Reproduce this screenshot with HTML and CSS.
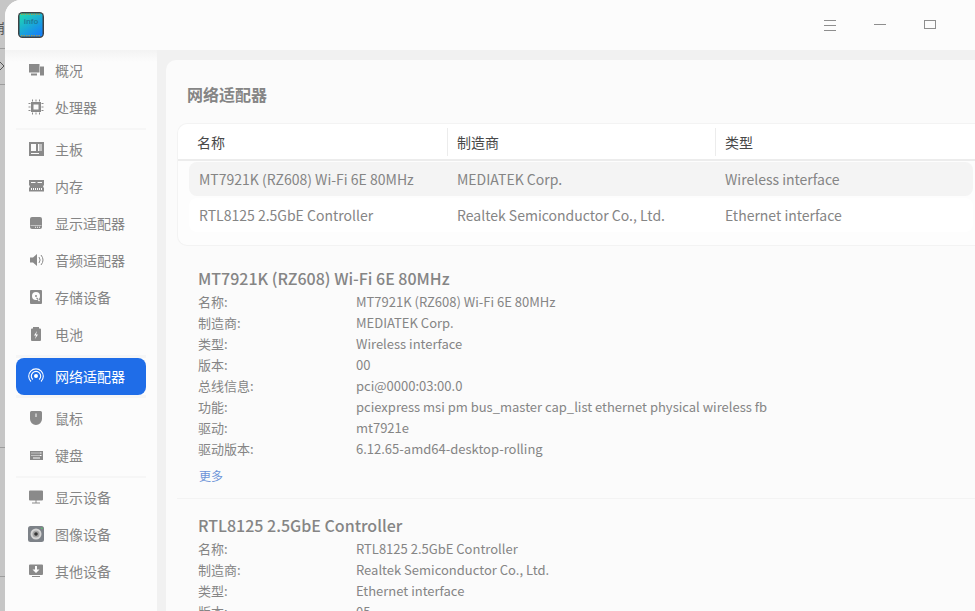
FILE: index.html
```html
<!DOCTYPE html>
<html lang="zh-CN">
<head>
<meta charset="utf-8">
<title>设备管理器</title>
<link rel="stylesheet" href="styles.css">
</head>
<body>
<div class="desktop">
  <span class="bg-text bg-a">崩</span>
  <svg class="bg-chev" viewBox="0 0 5 10" width="5" height="10"><path d="M0 1l4 4l-4 4"/></svg>
  <div class="bg-line bg-l1"></div>
  <div class="bg-line bg-l2"></div>
  <div class="bg-line bg-l3"></div>
  <div class="bg-line bg-l4"></div>
</div>
<div class="window">
  <header class="titlebar">
    <svg class="logo" viewBox="0 0 26 26" width="26" height="26">
      <defs><linearGradient id="lg" x1="0" y1="0" x2="0.7" y2="1"><stop offset="0" stop-color="#1fdcae"/><stop offset="1" stop-color="#1683f5"/></linearGradient></defs>
      <rect width="26" height="26" rx="4.500" fill="#3d4245"/>
      <rect x="1.500" y="1.500" width="23" height="23" rx="2" fill="url(#lg)"/>
      <path class="logo-dash" d="M3 2.300h20M3 23.700h20"/>
      <text x="13" y="11.500" class="logo-text" text-anchor="middle">info</text>
    </svg>
    <div class="win-btns">
      <svg width="14" height="14" viewBox="0 0 14 14" class="win-icon"><path d="M1 1.500h12M1 6.500h12M1 11.500h12" /></svg>
      <svg width="14" height="14" viewBox="0 0 14 14" class="win-icon"><path d="M1 5.500h12" /></svg>
      <svg width="14" height="14" viewBox="0 0 14 14" class="win-icon"><rect x="1.500" y="1.500" width="11" height="8" /></svg>
    </div>
  </header>
  <div class="body">
    <nav class="sidebar">
      <a class="nav-item">
        <svg class="ic" viewBox="0 0 16 16"><path d="M1 2h10.500v8.500h-10.500zM3 11.500h6v2h-6zM12 4.500h4v9h-4z" /></svg><span>概况</span></a>
      <a class="nav-item">
        <svg class="ic" viewBox="0 0 16 16"><path d="M3 3h10v10h-10zM5.500 5.500v5h5v-5zM4 0.500h1v2h-1zM7.500 0.500h1v2h-1zM11 0.500h1v2h-1zM4 13.500h1v2h-1zM7.500 13.500h1v2h-1zM11 13.500h1v2h-1zM0.500 4h2v1h-2zM0.500 7.500h2v1h-2zM0.500 11h2v1h-2zM13.500 4h2v1h-2zM13.500 7.500h2v1h-2zM13.500 11h2v1h-2z" fill-rule="evenodd"/></svg><span>处理器</span></a>
      <div class="sep"></div>
      <a class="nav-item">
        <svg class="ic" viewBox="0 0 16 16"><path d="M1 1h15v14h-15zM3 3v7h5v-7zM10 3v7h1.500v-7zM12.500 3v7h1v-7zM3 12v1h8v-1z" fill-rule="evenodd"/></svg><span>主板</span></a>
      <a class="nav-item">
        <svg class="ic" viewBox="0 0 16 16"><path d="M1 2h15v5.500h-.8v2h.8v4h-15v-4h.8v-2h-.8zM3 4v1h4.500v-1zM9.500 4v1h4.500v-1zM3 10v2h1v-2zM5 10v2h1v-2zM7 10v2h1v-2zM9 10v2h1v-2zM11 10v2h1v-2zM13 10v2h1v-2z" fill-rule="evenodd"/></svg><span>内存</span></a>
      <a class="nav-item">
        <svg class="ic" viewBox="0 0 16 16"><path d="M4 2h8a2 2 0 0 1 2 2v8a2 2 0 0 1-2 2h-8a2 2 0 0 1-2-2v-8a2 2 0 0 1 2-2zM7 11.800v1h1v-1zM9 11.800v1h1v-1zM11 11.800v1h1v-1zM2.500 10.500v.6h11v-.6z" fill-rule="evenodd"/></svg><span>显示适配器</span></a>
      <a class="nav-item">
        <svg class="ic" viewBox="0 0 16 16"><path d="M2 5.500h3l4-3.500v12l-4-3.500h-3z"/><path class="arc" d="M11 5a5 5 0 0 1 0 6M13 3a8 8 0 0 1 0 10"/></svg><span>音频适配器</span></a>
      <a class="nav-item">
        <svg class="ic" viewBox="0 0 16 16"><path d="M3 1h10a1 1 0 0 1 1 1v12a1 1 0 0 1-1 1h-10a1 1 0 0 1-1-1v-12a1 1 0 0 1 1-1zM8 3a4 4 0 1 0 0 8a4 4 0 1 0 0-8zM8 6a1 1 0 1 1 0 2a1 1 0 1 1 0-2zM8 9l3 3.500l1-1l-3-3z" fill-rule="evenodd"/></svg><span>存储设备</span></a>
      <a class="nav-item">
        <svg class="ic" viewBox="0 0 16 16"><path d="M5 1h6v1.500h1a1 1 0 0 1 1 1v10.500a1 1 0 0 1-1 1h-8a1 1 0 0 1-1-1v-10.500a1 1 0 0 1 1-1h1zM9 5l-3 4.500h2l-1 3.500l3-4.500h-2z" fill-rule="evenodd"/></svg><span>电池</span></a>
      <div class="band band-before"></div>
      <a class="nav-item active">
        <svg class="ic ic-net" viewBox="0 0 16 16"><circle cx="8" cy="8" r="2" class="dot"/><path class="arc" d="M4.800 11.500a4.700 4.700 0 1 1 6.400 0M3 13.500a7.300 7.300 0 1 1 10 0"/></svg><span>网络适配器</span></a>
      <div class="band band-after"></div>
      <a class="nav-item">
        <svg class="ic" viewBox="0 0 16 16"><path d="M3.500 1h9a1.500 1.500 0 0 1 1.500 1.500v6.500a6 6 0 0 1-12 0v-6.500a1.500 1.500 0 0 1 1.500-1.500zM7.500 3.500v3.500h1v-3.500z" fill-rule="evenodd"/></svg><span>鼠标</span></a>
      <a class="nav-item">
        <svg class="ic" viewBox="0 0 16 16"><path d="M2 4h13v9h-13zM3.500 5.500v1h1v-1zM5.500 5.500v1h1v-1zM7.500 5.500v1h1v-1zM9.500 5.500v1h1v-1zM11.500 5.500v1h2v-1zM3.500 8v1h1v-1zM5.500 8v1h1v-1zM7.500 8v1h1v-1zM9.500 8v1h1v-1zM11.500 8v1h2v-1zM5 10.500v1h7v-1z" fill-rule="evenodd"/></svg><span>键盘</span></a>
      <div class="sep"></div>
      <a class="nav-item">
        <svg class="ic" viewBox="0 0 16 16"><path d="M2 1.500h12a1 1 0 0 1 1 1v8a1 1 0 0 1-1 1h-12a1 1 0 0 1-1-1v-8a1 1 0 0 1 1-1zM7.500 11.500h1v2h-1zM4 13.500h8v1h-8z"/></svg><span>显示设备</span></a>
      <a class="nav-item">
        <svg class="ic ic-cam" viewBox="0 0 16 16"><rect width="16" height="16" rx="2.500" fill="#7d8288"/><circle cx="8" cy="8" r="5.500" fill="#d5d5d5"/><circle cx="8" cy="8" r="3.500" fill="#a5a5a5"/><circle cx="8" cy="8" r="1.800" fill="#333"/><circle cx="13.800" cy="2.200" r=".7" fill="#4cd964"/></svg><span>图像设备</span></a>
      <a class="nav-item">
        <svg class="ic" viewBox="0 0 16 16"><path d="M2 1.500h12a1 1 0 0 1 1 1v8.500a1 1 0 0 1-1 1h-12a1 1 0 0 1-1-1v-8.500a1 1 0 0 1 1-1zM7 3v3.500h-2.500l3.500 3.500l3.500-3.500h-2.500v-3.500zM4 13h8v1h-8z" fill-rule="evenodd"/></svg><span>其他设备</span></a>
    </nav>
    <main class="content">
      <h1 class="heading">网络适配器</h1>
      <section class="table">
        <div class="thead">
          <div class="th th-1">名称</div>
          <div class="th th-2">制造商</div>
          <div class="th th-3">类型</div>
        </div>
        <div class="rows">
          <div class="row row-sel">
            <div class="td td-1">MT7921K (RZ608) Wi-Fi 6E 80MHz</div>
            <div class="td td-2">MEDIATEK Corp.</div>
            <div class="td">Wireless interface</div>
          </div>
          <div class="row">
            <div class="td td-1">RTL8125 2.5GbE Controller</div>
            <div class="td td-2">Realtek Semiconductor Co., Ltd.</div>
            <div class="td">Ethernet interface</div>
          </div>
        </div>
      </section>
      <section class="detail">
        <h2 class="dev-title">MT7921K (RZ608) Wi-Fi 6E 80MHz</h2>
        <dl class="props">
          <dt>名称:</dt><dd>MT7921K (RZ608) Wi-Fi 6E 80MHz</dd>
          <dt>制造商:</dt><dd>MEDIATEK Corp.</dd>
          <dt>类型:</dt><dd>Wireless interface</dd>
          <dt>版本:</dt><dd>00</dd>
          <dt>总线信息:</dt><dd>pci@0000:03:00.0</dd>
          <dt>功能:</dt><dd>pciexpress msi pm bus_master cap_list ethernet physical wireless fb</dd>
          <dt>驱动:</dt><dd>mt7921e</dd>
          <dt>驱动版本:</dt><dd>6.12.65-amd64-desktop-rolling</dd>
        </dl>
        <a class="more">更多</a>
      </section>
      <section class="detail detail-2">
        <h2 class="dev-title">RTL8125 2.5GbE Controller</h2>
        <dl class="props">
          <dt>名称:</dt><dd>RTL8125 2.5GbE Controller</dd>
          <dt>制造商:</dt><dd>Realtek Semiconductor Co., Ltd.</dd>
          <dt>类型:</dt><dd>Ethernet interface</dd>
          <dt>版本:</dt><dd>05</dd>
        </dl>
      </section>
    </main>
  </div>
</div>
</body>
</html>
```

FILE: styles.css
```css
* { box-sizing: border-box; }
html, body { margin: 0; height: 100%; overflow: hidden; }
body {
  width: 975px;
  height: 611px;
  position: relative;
  background: #c6c6c6;
  font-family: "Noto Sans CJK SC", "Noto Sans", sans-serif;
  color: #858585;
}
.desktop { position: absolute; inset: 0; }
.bg-text { position: absolute; left: -9px; top: 18px; color: #555; font-size: 14px; line-height: 18px; }
.bg-chev { position: absolute; left: 0; top: 61px; fill: none; stroke: #555; stroke-width: 1; }
.bg-line { position: absolute; left: 0; width: 5px; height: 1px; background: #9d9d9d; }
.bg-l1 { top: 48px; }
.bg-l2 { top: 84px; }
.bg-l3 { top: 447px; }
.bg-l4 { top: 576px; }
.window {
  position: absolute;
  left: 5px;
  top: 0;
  width: 970px;
  height: 611px;
  border-top-left-radius: 16px;
  background: #fcfcfc;
  display: flex;
  flex-direction: column;
  overflow: hidden;
}
.titlebar {
  height: 50px;
  flex: none;
  background: #fcfcfc;
  display: flex;
  align-items: center;
  justify-content: space-between;
  padding: 0 0 0 13px;
}
.logo { display: block; }
.logo-dash { fill: none; stroke: #b39a3c; stroke-width: 1; stroke-dasharray: 1.500 1; }
.logo-text { font-family: "Liberation Sans", sans-serif; font-size: 8px; font-weight: 700; fill: #1f7d9c; }
.win-btns { display: flex; gap: 36px; padding-right: 38px; margin-top: 2px; }
.win-icon { fill: none; stroke: #8e8e8e; stroke-width: 1; display: block; }
.body { flex: 1; display: flex; min-height: 0; background: #f1f1f1; }
.sidebar {
  width: 152px;
  flex: none;
  padding: 2px 11px 0;
  display: flex;
  flex-direction: column;
  background: linear-gradient(#f3f3f3, #fcfcfc 12px);
}
.nav-item {
  height: 37px;
  flex: none;
  display: flex;
  align-items: center;
  gap: 11px;
  padding: 0 0 1px 12px;
  font-size: 14px;
  color: #858585;
  border-radius: 8px;
}
.nav-item.active { background: #1f6de8; color: #fff; }
.ic { width: 16px; height: 16px; flex: none; fill: #8a8a8a; }
.arc { fill: none; stroke: #8a8a8a; stroke-width: 1; }
.ic-net .arc { stroke: #fff; stroke-width: 1.100; }
.ic-net .dot { fill: #fff; }
.sep { height: 2px; margin: 2px 0 1px; flex: none; background: #f6f6f6; }
.band { height: 3px; flex: none; background: #f6f6f6; }
.band-before { margin-top: 2px; }
.band-after { margin-bottom: 2px; }
.content {
  flex: 1;
  min-width: 0;
  margin: 10px 0 0 9px;
  padding: 0 0 0 11px;
  background: #fbfbfb;
  border-top-left-radius: 10px;
  overflow: hidden;
}
.heading {
  margin: 0;
  padding: 22px 0 0 10px;
  height: 63px;
  font-size: 16px;
  font-weight: 700;
  line-height: 24px;
  color: #858585;
}
.table {
  height: 123px;
  background: #fdfdfd;
  border: 1px solid #f3f3f3;
  border-right: 0;
  border-radius: 10px 0 0 10px;
}
.thead { height: 37px; display: flex; align-items: center; background: #fff; border-bottom: 2px solid #ececec; border-top-left-radius: 10px; }
.th { height: 28px; line-height: 28px; font-size: 14px; color: #484848; border-left: 1px solid #ececec; padding-left: 9px; }
.th-1 { width: 269px; border-left: 0; padding-left: 19px; }
.th-2 { width: 268px; }
.th-3 { flex: 1; }
.rows { padding: 1px 2px 0 11px; display: flex; flex-direction: column; gap: 2px; }
.row { height: 34px; display: flex; align-items: center; background: #fff; border-radius: 8px; font-size: 14px; color: #858585; }
.row-sel { background: #f4f4f4; }
.td { white-space: nowrap; }
.td-1 { width: 268px; padding-left: 10px; }
.td-2 { width: 268px; }
.detail { padding: 20px 0 0 21px; border-bottom: 1px solid #f3f3f3; height: 253px; }
.dev-title { margin: 0; font-size: 16px; font-weight: 500; line-height: 25px; color: #858585; }
.props { margin: 0; display: grid; grid-template-columns: 158px 1fr; grid-auto-rows: 21px; font-size: 13px; line-height: 21px; color: #858585; }
.props dd { margin: 0; white-space: nowrap; }
.more { display: block; margin: 7px 0 0 1px; font-size: 12px; line-height: 20px; color: #6d94d8; }
.detail-2 { border: 0; padding-top: 14px; }
```
